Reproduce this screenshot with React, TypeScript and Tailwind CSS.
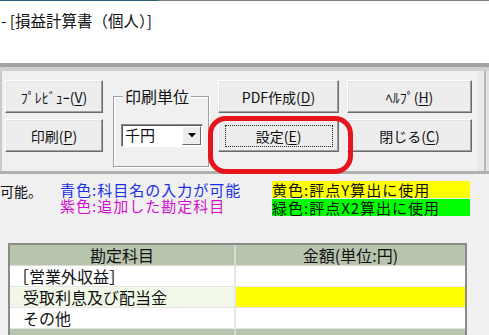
import React from "react";

const btn =
  "flex items-center justify-center bg-[#ededed] border border-t-white border-l-white border-r-[#6a6a6a] border-b-[#6a6a6a] shadow-[inset_-1px_-1px_0_#a0a0a0,inset_1px_1px_0_#e3e3e3] text-[14px] leading-none text-[#111]";

function Btn({ label, m, w, h, focus }: { label: string; m: string; w: string; h: string; focus?: boolean }) {
  return (
    <div className={`${btn} ${w} ${h} relative`}>
      {focus && <div className="absolute left-[6px] right-[5px] top-[5px] bottom-[4px] border border-dotted border-[#222]" />}
      <span>
        {label}(<u className="underline-offset-2">{m}</u>)
      </span>
    </div>
  );
}

export default function App() {
  return (
    <div className="w-[489px] h-[335px] overflow-hidden bg-[#f0f0f0] relative font-['Noto_Sans_CJK_JP',sans-serif]">
      <div className="h-px flex">
        <div className="w-[158px] bg-[#2b5e79]" />
        <div className="flex-1 bg-[#7c7c7c]" />
      </div>
      <div className="h-[62px] bg-white pt-[10px] overflow-hidden">
        <div className="pl-[1px] text-[15.5px] leading-[18px] text-[#111] whitespace-nowrap">- [損益計算書（個人）]</div>
      </div>
      {/* toolbar panel */}
      <div className="h-[111px] flex flex-col">
        <div className="h-[4px] bg-[#a2a2a2]" />
        <div className="h-[4px] bg-[#d0d0d0]" />
        <div className="flex-1 flex">
          <div className="w-[478px] border-l-2 border-[#c9c9c9] flex pt-[9px]">
            <div className="ml-[3px] w-[98px] flex flex-col gap-[6px]">
              <Btn label="ﾌﾟﾚﾋﾞｭｰ" m="V" w="w-[98px]" h="h-[33px]" />
              <Btn label="印刷" m="P" w="w-[98px]" h="h-[33px]" />
            </div>
            <div className="ml-[10px] mt-[16px] w-[96px] h-[71px] relative border border-[#a0a0a0] shadow-[inset_1px_1px_0_white,1px_1px_0_white]">
              <div className="absolute left-[9px] top-[-11px] px-[2px] bg-[#f0f0f0] text-[16px] leading-[20px] text-[#111]">印刷単位</div>
              <div className="absolute left-[7px] top-[27px] w-[82px] h-[23px] bg-white border border-t-[#8a8a8a] border-l-[#8a8a8a] border-r-white border-b-white shadow-[inset_1px_1px_0_#5a5a5a] flex">
                <div className="flex-1 pl-[3px] text-[15px] leading-[20px] text-[#111]">千円</div>
                <div className="w-[19px] h-[19px] mt-[1px] mr-[1px] bg-[#ededed] border border-t-white border-l-white border-r-[#6a6a6a] border-b-[#6a6a6a] flex items-center justify-center">
                  <svg width="8" height="5" viewBox="0 0 8 5"><path d="M0 0H8L4 4.5Z" fill="#000" /></svg>
                </div>
              </div>
            </div>
            <div className="ml-[9px] w-[121px] flex flex-col gap-[6px]">
              <Btn label="PDF作成" m="D" w="w-[121px]" h="h-[33px]" />
              <Btn label="設定" m="E" w="w-[121px]" h="h-[33px]" focus />
            </div>
            <div className="ml-[8px] w-[125px] flex flex-col gap-[6px]">
              <Btn label="ﾍﾙﾌﾟ" m="H" w="w-[125px]" h="h-[33px]" />
              <Btn label="閉じる" m="C" w="w-[125px]" h="h-[33px]" />
            </div>
          </div>
          <div className="flex-1 flex border-l border-[#e4e4e4]">
            <div className="w-[5px] bg-[#e9e9e9]" />
            <div className="w-[2px] bg-[#b8b8b8]" />
            <div className="flex-1 bg-[#e2e2e2]" />
          </div>
        </div>
        <div className="h-[3px] bg-[#b0b0b0]" />
      </div>
      {/* legend */}
      <div className="flex mt-[7px]">
        <div className="w-[60px] pt-[1px] text-[14px] leading-[18px] text-[#111]">可能。</div>
        <div className="w-[212px] pt-[1px] text-[15px] leading-[16px] tracking-[1px]">
          <div className="text-[#1a2ee6]">青色:科目名の入力が可能</div>
          <div className="text-[#d010d0]">紫色:追加した勘定科目</div>
        </div>
        <div className="w-[198px] flex flex-col gap-[1px] text-[15px] leading-[17px] tracking-[1px] text-[#111]">
          <div className="h-[17px] bg-[#ffff00]">黄色:評点Y算出に使用</div>
          <div className="h-[17px] bg-[#00ff00]">緑色:評点X2算出に使用</div>
        </div>
      </div>
      {/* table */}
      <div className="ml-[8px] mt-[27px] w-[459px] border-2 border-[#8a8a8a] border-b-0 text-[16px] leading-[20px] text-[#111]">
        <div className="grid grid-cols-[226px_1fr]">
          <div className="h-[21px] bg-[#b7c4ae] border-r-2 border-b border-[#d8dcd4] text-center">勘定科目</div>
          <div className="h-[21px] bg-[#b7c4ae] border-b border-[#d8dcd4] text-center">金額(単位:円)</div>

          <div className="h-[21px] bg-white border-r-2 border-b border-[#e6e6e6] pl-[3px]">［営業外収益］</div>
          <div className="h-[21px] bg-white border-b border-[#e6e6e6]" />

          <div className="h-[21px] bg-[#f1f8e7] border-r-2 border-b border-[#e6e6e6] pl-[13px]">受取利息及び配当金</div>
          <div className="h-[21px] bg-[#ffff00] border-b border-[#e6e6e6]" />

          <div className="h-[21px] bg-white border-r-2 border-b border-[#e6e6e6] pl-[13px]">その他</div>
          <div className="h-[21px] bg-white border-b border-[#e6e6e6]" />

          <div className="h-[21px] bg-[#b7c4ae] border-r-2 border-[#d8dcd4] pl-[48px] pt-[3px]">営業外収益 合計</div>
          <div className="h-[21px] bg-[#b7c4ae]" />
        </div>
      </div>
      {/* annotation */}
      <div className="absolute left-[208px] top-[116px] w-[145px] h-[58px] border-[5px] border-[#e6141c] rounded-[18px]" />
    </div>
  );
}
